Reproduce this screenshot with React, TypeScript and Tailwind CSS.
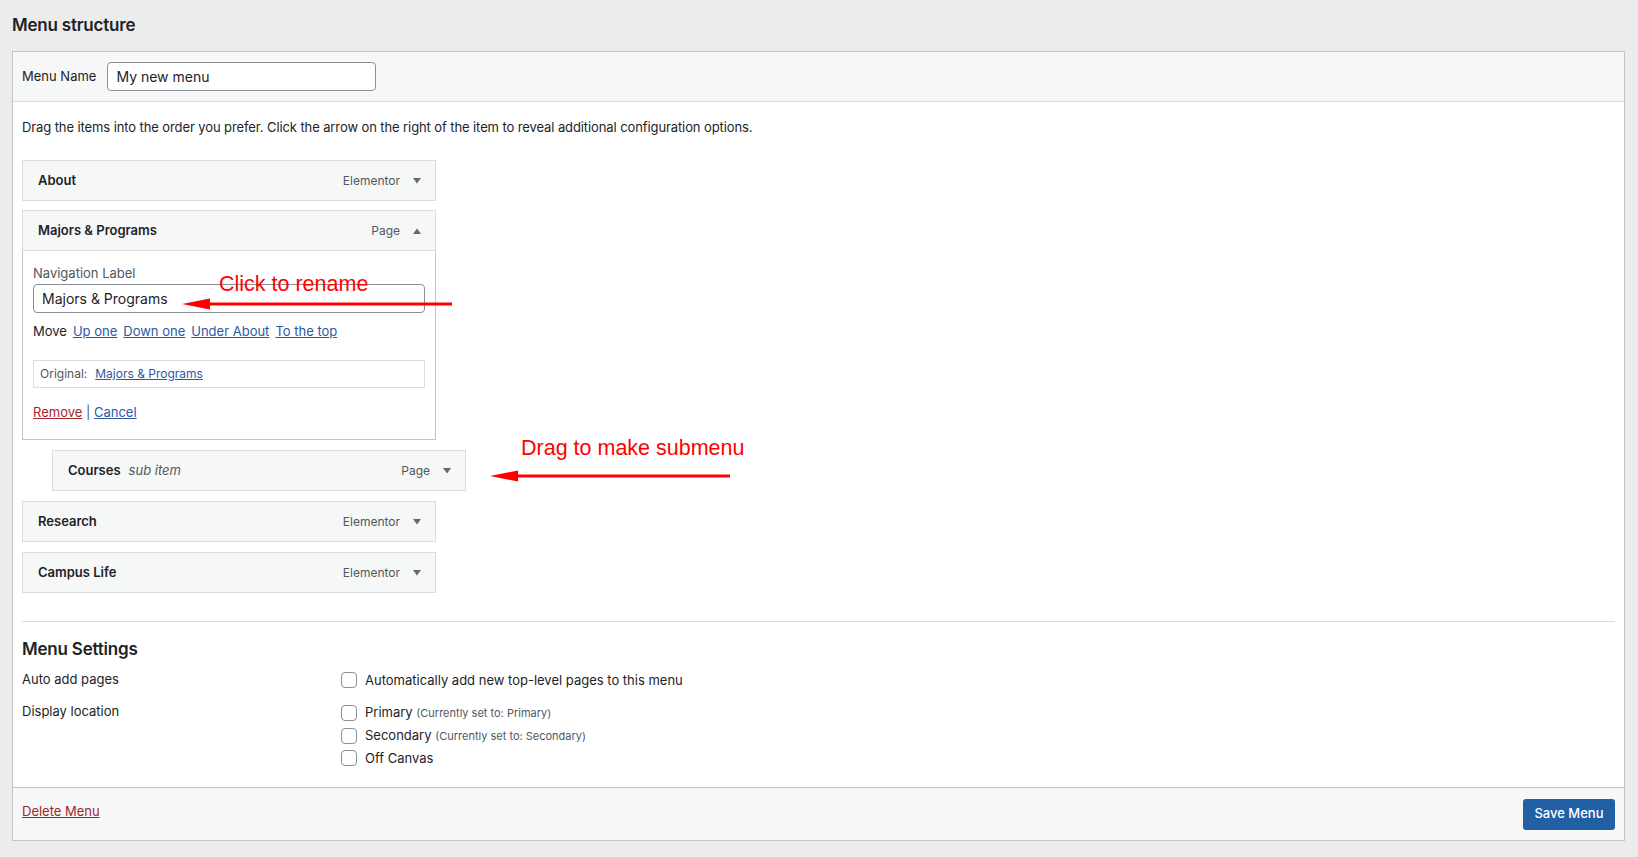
import React from "react";

const FONT = { fontFamily: "Inter, 'Noto Sans', sans-serif" };
const NOTE = { fontFamily: "'Liberation Sans', Arial, sans-serif" };

function Caret({ up = false }: { up?: boolean }) {
  return (
    <svg width="10" height="8" viewBox="0 0 10 8" className="ml-[12px]">
      {up ? <path d="M1 7 L5 1.5 L9 7 Z" fill="#646970" /> : <path d="M1 1 L5 6.5 L9 1 Z" fill="#646970" />}
    </svg>
  );
}

function ItemBar({ title, sub, type, up }: { title: string; sub?: string; type: string; up?: boolean }) {
  return (
    <div className="flex items-center h-[39px] pl-[15px] pr-[13px]">
      <span className="text-[13px] font-semibold text-[#1d2327]">{title}</span>
      {sub && <span className="ml-[8px] text-[13px] italic text-[#50575e]">{sub}</span>}
      <span className="ml-auto text-[12px] text-[#50575e]">{type}</span>
      <Caret up={up} />
    </div>
  );
}

function MenuItem(props: { title: string; sub?: string; type: string; indent?: boolean }) {
  return (
    <div className={`w-[414px] border border-[#dcdcde] bg-[#f6f7f7] ${props.indent ? "ml-[30px]" : ""}`}>
      <ItemBar {...props} />
    </div>
  );
}

function Checkbox() {
  return <span className="inline-block w-[16px] h-[16px] rounded-[4px] border border-[#8c8f94] bg-white shrink-0" />;
}

export default function App() {
  return (
    <div className="relative min-h-screen bg-[#ececec] pl-[12px] pr-[13px] pb-[18px] text-[#1d2327]" style={FONT}>
      <h2 className="h-[51px] pt-[13px] text-[17px] font-semibold leading-[24px] tracking-[-0.2px]">Menu structure</h2>

      <div className="border border-[#c3c4c7] bg-white">
        {/* header */}
        <div className="h-[50px] bg-[#f6f7f7] border-b border-[#dcdcde] flex items-center px-[9px]">
          <span className="text-[13px]">Menu Name</span>
          <div className="ml-[11px] w-[269px] h-[29px] border border-[#8c8f94] rounded-[4px] bg-white flex items-center px-[8px] text-[14px]">
            My new menu
          </div>
        </div>

        {/* body */}
        <div className="px-[9px] pt-[16px]">
          <p className="text-[13px] leading-[18px] tracking-[-0.1px]">
            Drag the items into the order you prefer. Click the arrow on the right of the item to reveal additional configuration options.
          </p>

          <div className="mt-[24px] flex flex-col gap-[10px]">
            <MenuItem title="About" type="Elementor" />

            <div className="-mt-px w-[414px] border border-[#dcdcde]">
              <div className="bg-[#f6f7f7] border-b border-[#dcdcde]">
                <ItemBar title="Majors & Programs" type="Page" up />
              </div>
              <div className="px-[10px] pt-[13px] pb-[18px] bg-white border-x border-b border-[#c3c4c7] -mx-px -mb-px">
                <div className="text-[13px] text-[#50575e] leading-[18px]">Navigation Label</div>
                <div className="mt-[2px] h-[29px] border border-[#8c8f94] rounded-[4px] flex items-center px-[8px] text-[14px]">
                  Majors &amp; Programs
                </div>
                <div className="mt-[8px] text-[13px] leading-[20px] flex gap-[6px]">
                  <span>Move</span>
                  <a className="text-[#2a5aa6] underline">Up one</a>
                  <a className="text-[#2a5aa6] underline">Down one</a>
                  <a className="text-[#2a5aa6] underline">Under About</a>
                  <a className="text-[#2a5aa6] underline">To the top</a>
                </div>
                <div className="mt-[19px] h-[28px] border border-[#dcdcde] flex items-center px-[6px] text-[12px]">
                  <span className="text-[#50575e]">Original:</span>
                  <a className="ml-[8px] text-[#2a5aa6] underline">Majors &amp; Programs</a>
                </div>
                <div className="mt-[15px] text-[13px] leading-[18px]">
                  <a className="text-[#a3262b] underline">Remove</a>
                  <span className="text-[#50575e]"> | </span>
                  <a className="text-[#2a5aa6] underline">Cancel</a>
                </div>
              </div>
            </div>

            <MenuItem title="Courses" sub="sub item" type="Page" indent />
            <MenuItem title="Research" type="Elementor" />
            <MenuItem title="Campus Life" type="Elementor" />
          </div>

          {/* settings */}
          <div className="mt-[28px] border-t border-[#dcdcde] pt-[15px] pb-[20px]">
            <h3 className="text-[17px] font-semibold leading-[24px] tracking-[-0.2px]">Menu Settings</h3>
            <div className="mt-[8px] grid grid-cols-[319px_1fr] text-[13px] leading-[18px]">
              <div className="pt-[1px]">Auto add pages</div>
              <label className="flex items-center gap-[8px] pt-[2px]">
                <Checkbox />
                <span>Automatically add new top-level pages to this menu</span>
              </label>
              <div className="mt-[12px] pt-[1px]">Display location</div>
              <div className="mt-[12px] pt-[2px] flex flex-col gap-[4px]">
                <label className="flex items-center gap-[8px]">
                  <Checkbox />
                  <span>
                    Primary <span className="text-[11px] text-[#50575e]">(Currently set to: Primary)</span>
                  </span>
                </label>
                <label className="flex items-center gap-[8px]">
                  <Checkbox />
                  <span>
                    Secondary <span className="text-[11px] text-[#50575e]">(Currently set to: Secondary)</span>
                  </span>
                </label>
                <label className="flex items-center gap-[8px]">
                  <Checkbox />
                  <span>Off Canvas</span>
                </label>
              </div>
            </div>
          </div>
        </div>

        {/* footer */}
        <div className="h-[53px] bg-[#f6f7f7] border-t border-[#c3c4c7] flex items-center px-[9px]">
          <a className="mb-[4px] text-[13px] text-[#a3262b] underline">Delete Menu</a>
          <button className="ml-auto w-[92px] h-[31px] rounded-[3px] bg-[#2260a6] text-white text-[13px] font-medium">
            Save Menu
          </button>
        </div>
      </div>

      {/* annotations */}
      <div className="absolute left-[219px] top-[269px] text-[21.5px] leading-[30px] text-[#ff0000]" style={NOTE}>
        Click to rename
      </div>
      <svg className="absolute left-[180px] top-[296px]" width="274" height="16" viewBox="0 0 274 16">
        <line x1="24" y1="8" x2="272" y2="8" stroke="#ff0000" strokeWidth="3" />
        <path d="M2 8 L30 2.5 L30 13.5 Z" fill="#ff0000" />
      </svg>
      <div className="absolute left-[521px] top-[433px] text-[21.5px] leading-[30px] text-[#ff0000]" style={NOTE}>
        Drag to make submenu
      </div>
      <svg className="absolute left-[488px] top-[468px]" width="244" height="16" viewBox="0 0 244 16">
        <line x1="24" y1="8" x2="242" y2="8" stroke="#ff0000" strokeWidth="3" />
        <path d="M2 8 L30 2.5 L30 13.5 Z" fill="#ff0000" />
      </svg>
    </div>
  );
}
